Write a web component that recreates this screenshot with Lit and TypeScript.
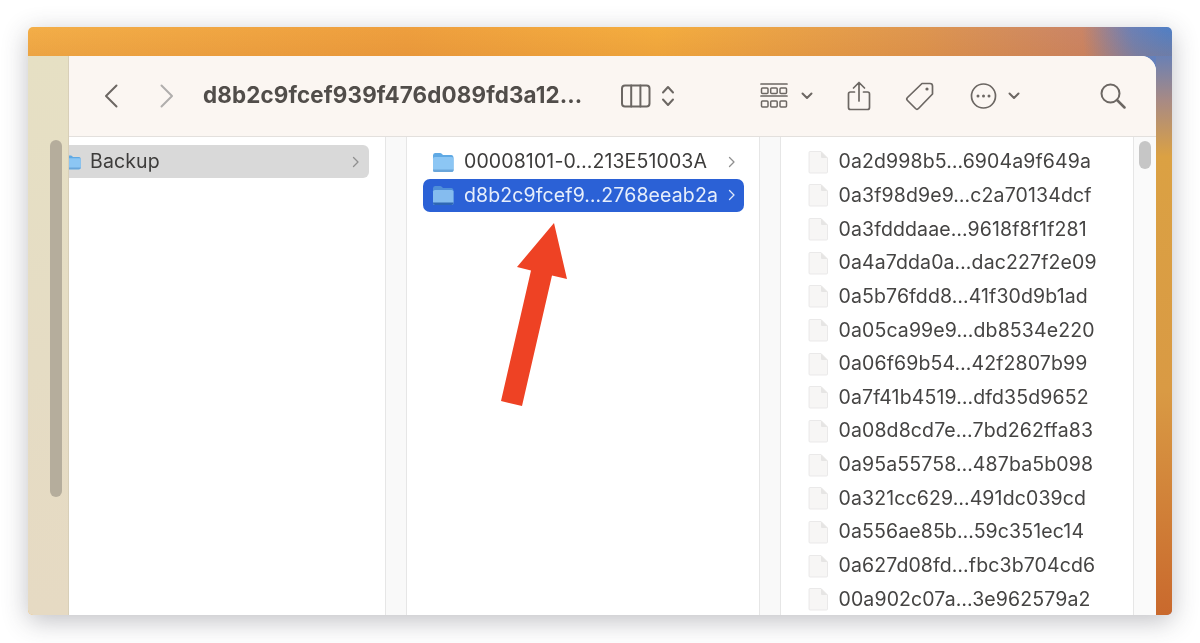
import { LitElement, html, css, svg } from "lit";
import { customElement } from "lit/decorators.js";

const FILES = [
  "0a2d998b5…6904a9f649a","0a3f98d9e9…c2a70134dcf","0a3fdddaae…9618f8f1f281","0a4a7dda0a…dac227f2e09",
  "0a5b76fdd8…41f30d9b1ad","0a05ca99e9…db8534e220","0a06f69b54…42f2807b99","0a7f41b4519…dfd35d9652",
  "0a08d8cd7e…7bd262ffa83","0a95a55758…487ba5b098","0a321cc629…491dc039cd","0a556ae85b…59c351ec14",
  "0a627d08fd…fbc3b704cd6","00a902c07a…3e962579a2",
];

const folder = (dark = false) => html`<svg class="folder" viewBox="0 0 22 22" width="22" height="22">
  <path d="M1 4.500Q1 2 3 2h5q1.200 0 2 1l1 1h8.500Q21.500 4 21.500 6.500V19q0 2-2 2H3q-2 0-2-2z" fill="${dark ? "#4f8fd8" : "#5fa9e4"}"/>
  <path d="M1 7.500Q1 6 3 6h16.500q2 0 2 1.500V19q0 2-2 2H3q-2 0-2-2z" fill="${dark ? "#85bcef" : "#8cc6f4"}"/>
  <path d="M1 19q0 2 2 2h16.500q2 0 2-2v-.6H1z" fill="${dark ? "#2e66b4" : "#6aa6da"}"/>
</svg>`;

const chev = html`<svg class="chev" viewBox="0 0 8 12" width="8" height="12"><path d="M1.500 1.500 6 6l-4.500 4.500" fill="none" stroke="currentColor" stroke-width="1.300" stroke-linecap="round" stroke-linejoin="round"/></svg>`;

const file = html`<svg class="file" viewBox="0 0 20 24" width="20" height="24">
  <path d="M1 2.500Q1 1.500 2 1.500h11L19.500 8v14q0 1-1 1H2q-1 0-1-1z" fill="#f7f6f5" stroke="#e6e5e4" stroke-width=".8"/>
  <path d="M13 1.500V7q0 1 1 1h5.500z" fill="#e6e5e4"/>
</svg>`;

const ic = (w: number, h: number, body: unknown) => html`<svg class="ic" width="${w}" height="${h}" viewBox="0 0 ${w} ${h}" fill="none" stroke="currentColor" stroke-width="2" stroke-linecap="round" stroke-linejoin="round">${body}</svg>`;

const smallDown = ic(12, 8, svg`<path d="M1.500 1.500 6 6l4.500-4.500"/>`);

@customElement("app-root")
export class AppRoot extends LitElement {
  static styles = css`
    :host { display: block; width: 1200px; height: 643px; background: #fff; overflow: hidden; font-family: Inter, "Noto Sans", sans-serif; padding: 27px 28px 28px; box-sizing: border-box; position: relative; }
    .win { height: 588px; display: flex; flex-direction: column; border-radius: 5px; box-shadow: 0 6px 26px rgba(60,60,70,.32); filter: blur(.35px);
      background:
        linear-gradient(180deg, rgba(200,110,40,0) 0, rgba(200,110,40,.16) 29px, rgba(200,110,40,0) 29px),
        radial-gradient(90px 120px at 100% 0, #4f7fc6 0, rgba(95,128,190,.85) 45%, rgba(120,125,170,0) 100%),
        linear-gradient(90deg, #f3ae48 0, #ee9f3e 33%, #f4ad3f 55%, #de9650 78%, #c98468 93%, #a8809a 100%);
      overflow: hidden; position: relative; }
    .top { height: 29px; flex: none; }
    .body { flex: 1; display: flex; min-height: 0; }
    .strip { width: 41px; flex: none; background: linear-gradient(180deg, #e6e0c4 0, #e5dcc4 55%, #e6dac3 100%); border-right: 1px solid #d8cfb8; box-sizing: border-box; padding: 84px 0 0 22px; }
    .thumbL { width: 12px; height: 357px; border-radius: 6px; background: #b5ad9c; }
    .panel { flex: 1; min-width: 0; display: flex; flex-direction: column; background: #fff; border-top-right-radius: 15px; overflow: hidden; }
    .edge { width: 16px; flex: none; background: linear-gradient(180deg, #6a80b4 0, #a88a84 8%, #dba143 18%, #d99a44 60%, #c9692d 100%); }
    .bar { height: 81px; flex: none; box-sizing: border-box; background: #fbf6f2; border-bottom: 1px solid #e3e0dd; display: flex; align-items: center; color: #6c6763; padding-left: 35px; }
    .bar .ic { flex: none; display: block; }
    .sp { flex: none; }
    .fwd { color: #b0aeac; display: flex; }
    .title { font-size: 22.400px; font-weight: 700; color: #514d4a; margin-left: 29px; width: 418px; white-space: nowrap; letter-spacing: .14px; line-height: 1; padding-bottom: 2px; }
    .cols { flex: 1; display: flex; min-height: 0; }
    .col { overflow: hidden; padding-top: 8px; box-sizing: border-box; }
    .c1 { width: 316px; }
    .c2 { width: 352px; }
    .c3 { width: 352px; }
    .gut { width: 22px; flex: none; background: #f9f9f9; box-sizing: border-box; border-left: 1px solid #e6e6e6; border-right: 1px solid #e6e6e6; }
    .row { height: 33.650px; display: flex; align-items: center; font-size: 19.500px; letter-spacing: .12px; color: #3d3c3b; white-space: nowrap; box-sizing: border-box; }
    .row span { flex: 1; padding-bottom: 1px; }
    .c1 .row { margin: 0 16px 0 -24px; background: #d9d9d9; border-radius: 6px; padding-left: 20px; padding-right: 9px; height: 33px; }
    .c1 .row span { margin-left: 9px; }
    .c1 .folder { width: 16px; height: 20px; }
    .c2 .row { margin: 0 15px 0 16px; border-radius: 7px; padding: 0 8px 0 9px; }
    .c2 .row span { margin-left: 10px; }
    .c2 .row.sel { background: #2b61d6; color: #e6eefb; }
    .chev { color: #8f8f8f; flex: none; }
    .sel .chev { color: #dfe8fa; }
    .c3 .row { padding-left: 27px; color: #454443; }
    .c3 .row span { margin-left: 10.500px; }
    .track { width: 23px; flex: none; background: #fafafa; box-sizing: border-box; border-left: 1px solid #e6e6e6; padding: 4px 0 0 5px; }
    .thumbR { width: 12px; height: 28px; border-radius: 6px; background: #c6c6c6; }
    .arrow { position: absolute; left: 0; top: 0; pointer-events: none; }
  `;

  private sp(w: number) { return html`<div class="sp" style="width:${w}px"></div>`; }

  render() {
    return html`
      <div class="win">
        <div class="top"></div>
        <div class="body">
          <div class="strip"><div class="thumbL"></div></div>
          <div class="panel">
            <div class="bar">
              ${ic(14, 24, svg`<path d="M12.500 1.500 2 12l10.500 10.500"/>`)}
              ${this.sp(42)}
              <span class="fwd">${ic(14, 24, svg`<path d="M1.500 1.500 12 12 1.500 22.500"/>`)}</span>
              <div class="title">d8b2c9fcef939f476d089fd3a12…</div>
              ${ic(31, 24, svg`<rect x="1" y="1.500" width="27.500" height="21" rx="3"/><path d="M10.200 1.500v21M19.400 1.500v21"/>`)}
              ${this.sp(8.5)}
              ${ic(14, 24, svg`<path d="M2 8.500 7 3l5 5.500M2 15.500 7 21l5-5.500"/>`)}
              ${this.sp(85.5)}
              ${ic(28, 28, svg`<path d="M1 2h26M1 14h26" stroke-width="1.700"/><g stroke-width="1.500"><rect x="1.500" y="6" width="6.500" height="5.500" rx="1"/><rect x="10.700" y="6" width="6.500" height="5.500" rx="1"/><rect x="20" y="6" width="6.500" height="5.500" rx="1"/><rect x="1.500" y="19" width="6.500" height="6" rx="1"/><rect x="10.700" y="19" width="6.500" height="6" rx="1"/><rect x="20" y="19" width="6.500" height="6" rx="1"/></g>`)}
              ${this.sp(13)}
              ${smallDown}
              ${this.sp(34)}
              ${ic(24, 30, svg`<path d="M7.500 11H3.500Q1.500 11 1.500 13v13.500q0 2 2 2h17q2 0 2-2V13q0-2-2-2h-4M12 20V1.500M6.500 7 12 1.500 17.500 7" stroke-width="1.700"/>`)}
              ${this.sp(34)}
              ${ic(30, 30, svg`<path d="M17 2.500h8q2.500 0 2.500 2.500v8L13.500 27.500q-1.500 1.500-3 0L2.500 19.500q-1.500-1.500 0-3z" stroke-width="1.700"/><circle cx="22" cy="8" r="1.600" fill="currentColor" stroke="none"/>`)}
              ${this.sp(35)}
              ${ic(27, 28, svg`<circle cx="13.500" cy="14" r="12" stroke-width="1.700"/><circle cx="8" cy="14" r="1.500" fill="currentColor" stroke="none"/><circle cx="13.500" cy="14" r="1.500" fill="currentColor" stroke="none"/><circle cx="19" cy="14" r="1.500" fill="currentColor" stroke="none"/>`)}
              ${this.sp(11)}
              ${smallDown}
              ${this.sp(80)}
              ${ic(26, 26, svg`<circle cx="10.500" cy="10.500" r="9"/><path d="m17 17 7.500 7.500" stroke-width="2.500"/>`)}
            </div>
            <div class="cols">
              <div class="col c1"><div class="row">${folder()}<span>Backup</span>${chev}</div></div>
              <div class="gut"></div>
              <div class="col c2">
                <div class="row">${folder()}<span>00008101-0…213E51003A</span>${chev}</div>
                <div class="row sel">${folder(true)}<span>d8b2c9fcef9…2768eeab2a</span>${chev}</div>
              </div>
              <div class="gut"></div>
              <div class="col c3">${FILES.map((f) => html`<div class="row">${file}<span>${f}</span></div>`)}</div>
              <div class="track"><div class="thumbR"></div></div>
            </div>
          </div>
          <div class="edge"></div>
        </div>
      </div>
      <svg class="arrow" width="1200" height="643"><polygon points="554,223 517,267 531,270.500 501,401 522,406 552,275.500 567,279" fill="#ee4224"/></svg>
    `;
  }
}
